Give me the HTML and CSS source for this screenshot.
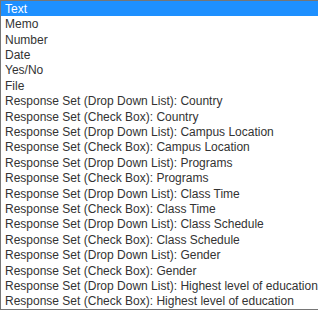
FILE: index.html
```html
<!DOCTYPE html>
<html lang="en">
<head>
    <meta charset="UTF-8">
    <title>Field Types</title>
    <link rel="stylesheet" href="styles.css">
</head>
<body>
    <ul class="type-list">
        <li class="selected">Text</li>
        <li>Memo</li>
        <li>Number</li>
        <li>Date</li>
        <li>Yes/No</li>
        <li>File</li>
        <li>Response Set (Drop Down List): Country</li>
        <li>Response Set (Check Box): Country</li>
        <li>Response Set (Drop Down List): Campus Location</li>
        <li>Response Set (Check Box): Campus Location</li>
        <li>Response Set (Drop Down List): Programs</li>
        <li>Response Set (Check Box): Programs</li>
        <li>Response Set (Drop Down List): Class Time</li>
        <li>Response Set (Check Box): Class Time</li>
        <li>Response Set (Drop Down List): Class Schedule</li>
        <li>Response Set (Check Box): Class Schedule</li>
        <li>Response Set (Drop Down List): Gender</li>
        <li>Response Set (Check Box): Gender</li>
        <li>Response Set (Drop Down List): Highest level of education</li>
        <li>Response Set (Check Box): Highest level of education</li>
    </ul>
</body>
</html>
```

FILE: styles.css
```css
body {
    margin: 0;
    background-color: white;
    font-family: "Liberation Sans", Arial, sans-serif;
}
.type-list {
    list-style: none;
    margin: 0;
    padding: 0;
    width: 330px;
    height: 308px;
    border: 1px solid #767676;
    overflow: hidden;
    display: flex;
    flex-direction: column;
}
.type-list li {
    flex: 1;
    display: flex;
    align-items: center;
    padding: 0 4px;
    font-size: 12px;
    color: #333;
    white-space: nowrap;
}
.type-list li.selected {
    background-color: #1e90ff;
    color: white;
}
```
